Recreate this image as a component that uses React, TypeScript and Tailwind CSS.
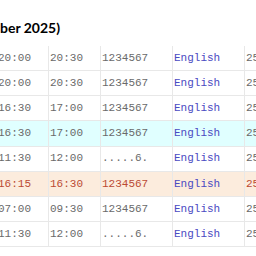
import React from "react";

type Row = { a: string; b: string; c: string; kind?: "cyan" | "peach" };

const rows: Row[] = [
  { a: "20:00", b: "20:30", c: "1234567" },
  { a: "20:00", b: "20:30", c: "1234567" },
  { a: "16:30", b: "17:00", c: "1234567" },
  { a: "16:30", b: "17:00", c: "1234567", kind: "cyan" },
  { a: "11:30", b: "12:00", c: ".....6." },
  { a: "16:15", b: "16:30", c: "1234567", kind: "peach" },
  { a: "07:00", b: "09:30", c: "1234567" },
  { a: "11:30", b: "12:00", c: ".....6." },
];

export default function App() {
  return (
    <div className="w-[256px] h-[256px] overflow-hidden bg-white">
      <div
        className="mt-[18px] text-[14px] leading-[19px] font-bold text-black"
        style={{ fontFamily: 'Lato, sans-serif' }}
      >
        ber 2025)
      </div>
      <div
        className="mt-[9px] ml-[-4px] w-[320px] text-[11px]"
        style={{ fontFamily: '"Liberation Mono", monospace' }}
      >
        {rows.map((r, i) => {
          const bg =
            r.kind === "cyan"
              ? "bg-[#e0ffff]"
              : r.kind === "peach"
              ? "bg-[#fcecdd]"
              : "bg-white";
          const txt = r.kind === "peach" ? "text-[#bb4a33]" : "text-[#6a6a6a]";
          return (
            <div
              key={i}
              className={`flex h-[25.15px] items-center border-b border-[#e8e8e8] ${bg} ${txt}`}
            >
              <div className="w-[53px] h-full flex items-center pl-[2px] border-r border-[#e8e8e8]">
                {r.a}
              </div>
              <div className="w-[52px] h-full flex items-center pl-[1px] border-r border-[#e8e8e8]">
                {r.b}
              </div>
              <div className="w-[72px] h-full flex items-center pl-[1px] border-r border-[#e8e8e8]">
                {r.c}
              </div>
              <div className="w-[72px] h-full flex items-center pl-[1px] border-r border-[#e8e8e8] text-[#4a4ac2]">
                English
              </div>
              <div className="flex-1 h-full flex items-center pl-[1px]">25</div>
            </div>
          );
        })}
      </div>
    </div>
  );
}
